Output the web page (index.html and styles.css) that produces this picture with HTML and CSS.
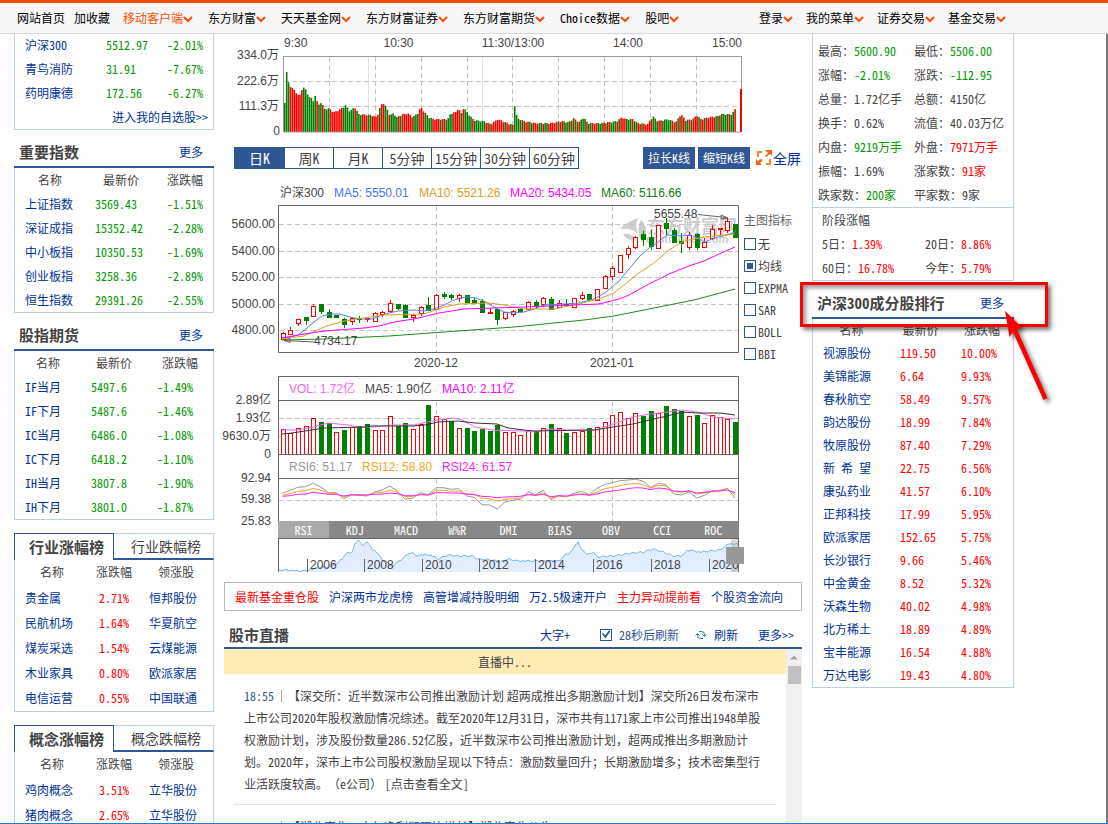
FILE: index.html
```html
<!DOCTYPE html>
<html lang="zh-CN">
<head>
<meta charset="utf-8">
<title>沪深300</title>
<link rel="stylesheet" href="styles.css">
</head>
<body>
<header class="topbar">
  <nav class="topnav">
    <a href="#" class="home">网站首页</a>
    <a href="#" class="fav">加收藏</a>
    <a href="#" class="hot">移动客户端<svg class="caret" viewBox="0 0 10 8"><path d="M1 2l4 4 4-4"/></svg></a>
    <a href="#">东方财富<svg class="caret" viewBox="0 0 10 8"><path d="M1 2l4 4 4-4"/></svg></a>
    <a href="#">天天基金网<svg class="caret" viewBox="0 0 10 8"><path d="M1 2l4 4 4-4"/></svg></a>
    <a href="#">东方财富证券<svg class="caret" viewBox="0 0 10 8"><path d="M1 2l4 4 4-4"/></svg></a>
    <a href="#">东方财富期货<svg class="caret" viewBox="0 0 10 8"><path d="M1 2l4 4 4-4"/></svg></a>
    <a href="#">Choice数据<svg class="caret" viewBox="0 0 10 8"><path d="M1 2l4 4 4-4"/></svg></a>
    <a href="#">股吧<svg class="caret" viewBox="0 0 10 8"><path d="M1 2l4 4 4-4"/></svg></a>
  </nav>
  <nav class="topnav account">
    <a href="#">登录<svg class="caret" viewBox="0 0 10 8"><path d="M1 2l4 4 4-4"/></svg></a>
    <a href="#">我的菜单<svg class="caret" viewBox="0 0 10 8"><path d="M1 2l4 4 4-4"/></svg></a>
    <a href="#">证券交易<svg class="caret" viewBox="0 0 10 8"><path d="M1 2l4 4 4-4"/></svg></a>
    <a href="#">基金交易<svg class="caret" viewBox="0 0 10 8"><path d="M1 2l4 4 4-4"/></svg></a>
  </nav>
</header>

<main class="page">
  <aside class="left">
    <section class="box watch">
      <table class="list">
        <colgroup><col class="c81"><col class="c61"><col></colgroup>
        <tr><td><a href="#">沪深300</a></td><td class="down">5512.97</td><td class="down end">-2.01%</td></tr>
        <tr><td><a href="#">青鸟消防</a></td><td class="down">31.91</td><td class="down end">-7.67%</td></tr>
        <tr><td><a href="#">药明康德</a></td><td class="down">172.56</td><td class="down end">-6.27%</td></tr>
      </table>
      <a href="#" class="enter">进入我的自选股&gt;&gt;</a>
    </section>

    <div class="head"><h2>重要指数</h2><a href="#">更多</a></div>
    <section class="box">
      <table class="list">
        <colgroup><col class="c70"><col class="c72"><col></colgroup>
        <tr><th>名称</th><th>最新价</th><th>涨跌幅</th></tr>
        <tr><td><a href="#">上证指数</a></td><td class="down">3569.43</td><td class="down end">-1.51%</td></tr>
        <tr><td><a href="#">深证成指</a></td><td class="down">15352.42</td><td class="down end">-2.28%</td></tr>
        <tr><td><a href="#">中小板指</a></td><td class="down">10350.53</td><td class="down end">-1.69%</td></tr>
        <tr><td><a href="#">创业板指</a></td><td class="down">3258.36</td><td class="down end">-2.89%</td></tr>
        <tr><td><a href="#">恒生指数</a></td><td class="down">29391.26</td><td class="down end">-2.55%</td></tr>
      </table>
    </section>

    <div class="head"><h2>股指期货</h2><a href="#">更多</a></div>
    <section class="box">
      <table class="list">
        <tr><th>名称</th><th>最新价</th><th>涨跌幅</th></tr>
        <tr><td><a href="#">IF当月</a></td><td class="down">5497.6</td><td class="down">-1.49%</td></tr>
        <tr><td><a href="#">IF下月</a></td><td class="down">5487.6</td><td class="down">-1.46%</td></tr>
        <tr><td><a href="#">IC当月</a></td><td class="down">6486.0</td><td class="down">-1.08%</td></tr>
        <tr><td><a href="#">IC下月</a></td><td class="down">6418.2</td><td class="down">-1.10%</td></tr>
        <tr><td><a href="#">IH当月</a></td><td class="down">3807.8</td><td class="down">-1.90%</td></tr>
        <tr><td><a href="#">IH下月</a></td><td class="down">3801.0</td><td class="down">-1.87%</td></tr>
      </table>
    </section>

    <section class="tabbed">
      <div class="tabs"><button type="button" class="on">行业涨幅榜</button><button type="button">行业跌幅榜</button></div>
      <div class="box">
        <table class="list roomy">
          <colgroup><col class="c74"><col class="c50"><col></colgroup>
          <tr><th>名称</th><th>涨跌幅</th><th>领涨股</th></tr>
          <tr><td><a href="#">贵金属</a></td><td class="up">2.71%</td><td><a href="#">恒邦股份</a></td></tr>
          <tr><td><a href="#">民航机场</a></td><td class="up">1.64%</td><td><a href="#">华夏航空</a></td></tr>
          <tr><td><a href="#">煤炭采选</a></td><td class="up">1.54%</td><td><a href="#">云煤能源</a></td></tr>
          <tr><td><a href="#">木业家具</a></td><td class="up">0.80%</td><td><a href="#">欧派家居</a></td></tr>
          <tr><td><a href="#">电信运营</a></td><td class="up">0.55%</td><td><a href="#">中国联通</a></td></tr>
        </table>
      </div>
    </section>

    <section class="tabbed">
      <div class="tabs"><button type="button" class="on">概念涨幅榜</button><button type="button">概念跌幅榜</button></div>
      <div class="box">
        <table class="list roomy">
          <colgroup><col class="c74"><col class="c50"><col></colgroup>
          <tr><th>名称</th><th>涨跌幅</th><th>领涨股</th></tr>
          <tr><td><a href="#">鸡肉概念</a></td><td class="up">3.51%</td><td><a href="#">立华股份</a></td></tr>
          <tr><td><a href="#">猪肉概念</a></td><td class="up">2.65%</td><td><a href="#">立华股份</a></td></tr>
        </table>
      </div>
    </section>
  </aside>

  <section class="middle">
    <svg class="chart" id="minute" viewBox="0 0 578 106"></svg>

    <div class="toolbar">
      <div class="periods">
        <button type="button" class="on">日K</button><button type="button">周K</button><button type="button">月K</button><button type="button">5分钟</button><button type="button">15分钟</button><button type="button">30分钟</button><button type="button">60分钟</button>
      </div>
      <div class="actions">
        <button type="button">拉长K线</button><button type="button">缩短K线</button>
        <a href="#" class="full"><svg viewBox="0 0 16 16"><path class="a" d="M1 7V1h5v2H3v4zM15 9v6h-5v-2h3V9z"/><path class="b" d="M9 0h7v6l-2-2-4 3-1-1 3-3zM0 9l2 2 3-2 2 1-3 3 2 2H0z"/></svg>全屏</a>
      </div>
    </div>

    <div class="kline">
      <div class="plots">
        <svg class="chart" id="candles" viewBox="0 0 516 195"></svg>
        <svg class="chart" id="volume" viewBox="0 0 516 151"></svg>
        <div class="oscillators">
          <button type="button" class="on">RSI</button><button type="button">KDJ</button><button type="button">MACD</button><button type="button">W%R</button><button type="button">DMI</button><button type="button">BIAS</button><button type="button">OBV</button><button type="button">CCI</button><button type="button">ROC</button>
        </div>
        <svg class="chart" id="navigator" viewBox="0 0 516 34"></svg>
      </div>
      <fieldset class="overlays">
        <legend>主图指标</legend>
        <label><input type="radio" name="overlay">无</label>
        <label><input type="radio" name="overlay" checked>均线</label>
        <label><input type="radio" name="overlay">EXPMA</label>
        <label><input type="radio" name="overlay">SAR</label>
        <label><input type="radio" name="overlay">BOLL</label>
        <label><input type="radio" name="overlay">BBI</label>
      </fieldset>
    </div>

    <nav class="quick">
      <a href="#" class="up">最新基金重仓股</a>
      <a href="#">沪深两市龙虎榜</a>
      <a href="#">高管增减持股明细</a>
      <a href="#">万2.5极速开户</a>
      <a href="#" class="up">主力异动提前看</a>
      <a href="#">个股资金流向</a>
    </nav>

    <div class="live-head">
      <h2>股市直播</h2>
      <a href="#" class="bigger">大字+</a>
      <label><input type="checkbox" checked>28秒后刷新</label>
      <a href="#" class="reload"><svg viewBox="0 0 12 12"><path d="M4 2.500h2.500a3 3 0 0 1 3 3V7M7.500 5.500l2 2 2-2M8 9.500H5.500a3 3 0 0 1-3-3V5M.5 6.500l2-2 2 2"/></svg>刷新</a>
      <a href="#">更多&gt;&gt;</a>
    </div>
    <div class="live">
      <div class="feed">
        <p class="status">直播中...</p>
        <article><time>18:55</time>【深交所：近半数深市公司推出激励计划 超两成推出多期激励计划】深交所<span class="n">26</span>日发布深市上市公司<span class="n">2020</span>年股权激励情况综述。截至<span class="n">2020</span>年<span class="n">12</span>月<span class="n">31</span>日，深市共有<span class="n">1171</span>家上市公司推出<span class="n">1948</span>单股权激励计划，涉及股份数量<span class="n">286.52</span>亿股，近半数深市公司推出激励计划，超两成推出多期激励计划。<span class="n">2020</span>年，深市上市公司股权激励呈现以下特点：激励数量回升；长期激励增多；技术密集型行业活跃度较高。（<span class="n">e</span>公司） <span class="n">[</span>点击查看全文<span class="n">]</span></article>
        <article><time>18:53</time>【湖北宜化：去年净利润同比增长】湖北宜化公告</article>
      </div>
      <div class="scroll"><svg viewBox="0 0 16 16"><path d="M4 10l4-4 4 4z"/></svg><span></span></div>
    </div>
  </section>

  <aside class="right">
    <section class="box quote">
      <dl>
        <div><dt>最高：</dt><dd class="down">5600.90</dd></div><div><dt>最低：</dt><dd class="down">5506.00</dd></div>
        <div><dt>涨幅：</dt><dd class="down">-2.01%</dd></div><div><dt>涨跌：</dt><dd class="down">-112.95</dd></div>
        <div><dt>总量：</dt><dd>1.72亿手</dd></div><div><dt>总额：</dt><dd>4150亿</dd></div>
        <div><dt>换手：</dt><dd>0.62%</dd></div><div><dt>流值：</dt><dd>40.03万亿</dd></div>
        <div><dt>内盘：</dt><dd class="down">9219万手</dd></div><div><dt>外盘：</dt><dd class="up">7971万手</dd></div>
        <div><dt>振幅：</dt><dd>1.69%</dd></div><div><dt>涨家数：</dt><dd class="up">91家</dd></div>
        <div><dt>跌家数：</dt><dd class="down">200家</dd></div><div><dt>平家数：</dt><dd>9家</dd></div>
      </dl>
    </section>
    <section class="box stage">
      <h3>阶段涨幅</h3>
      <dl>
        <div><dt>5日：</dt><dd class="up">1.39%</dd></div><div><dt>20日：</dt><dd class="up">8.86%</dd></div>
        <div><dt>60日：</dt><dd class="up">16.78%</dd></div><div><dt>今年：</dt><dd class="up">5.79%</dd></div>
      </dl>
    </section>
    <section class="rank">
      <div class="head"><h2>沪深300成分股排行</h2><a href="#">更多</a></div>
      <div class="box">
        <table class="list dense">
          <colgroup><col class="c77"><col class="c61"><col></colgroup>
          <tr><th>名称</th><th>最新价</th><th>涨跌幅</th></tr>
          <tr><td><a href="#">视源股份</a></td><td>119.50</td><td>10.00%</td></tr>
          <tr><td><a href="#">美锦能源</a></td><td>6.64</td><td>9.93%</td></tr>
          <tr><td><a href="#">春秋航空</a></td><td>58.49</td><td>9.57%</td></tr>
          <tr><td><a href="#">韵达股份</a></td><td>18.99</td><td>7.84%</td></tr>
          <tr><td><a href="#">牧原股份</a></td><td>87.40</td><td>7.29%</td></tr>
          <tr><td><a href="#">新 希 望</a></td><td>22.75</td><td>6.56%</td></tr>
          <tr><td><a href="#">康弘药业</a></td><td>41.57</td><td>6.10%</td></tr>
          <tr><td><a href="#">正邦科技</a></td><td>17.99</td><td>5.95%</td></tr>
          <tr><td><a href="#">欧派家居</a></td><td>152.65</td><td>5.75%</td></tr>
          <tr><td><a href="#">长沙银行</a></td><td>9.66</td><td>5.46%</td></tr>
          <tr><td><a href="#">中金黄金</a></td><td>8.52</td><td>5.32%</td></tr>
          <tr><td><a href="#">沃森生物</a></td><td>40.02</td><td>4.98%</td></tr>
          <tr><td><a href="#">北方稀土</a></td><td>18.89</td><td>4.89%</td></tr>
          <tr><td><a href="#">宝丰能源</a></td><td>16.54</td><td>4.88%</td></tr>
          <tr><td><a href="#">万达电影</a></td><td>19.43</td><td>4.80%</td></tr>
        </table>
      </div>
      <div class="mark"></div>
      <svg class="pointer" viewBox="0 0 60 100"><path d="M8 6L12.500 32 16 27l30.500 68 4-2L20 24.500l5-2z"/></svg>
    </section>
  </aside>
</main>
<script src="charts.js"></script>
</body>
</html>
```

FILE: styles.css
```css
* { box-sizing: border-box; }
body {
  margin: 0;
  height: 100vh;
  overflow: hidden;
  display: flex;
  flex-direction: column;
  background: #fff;
  color: #444;
  font: 12px/24px "Noto Sans CJK SC", sans-serif;
  font-feature-settings: "hwid";
  border-bottom: 1px solid #1c7fd0;
}
a { color: #039; text-decoration: none; }
button, input { font: inherit; font-feature-settings: inherit; margin: 0; }
button { padding: 0; cursor: pointer; }
h2, h3, p, dl, dd { margin: 0; }
h2 { font-size: 15px; font-weight: 700; color: #444; }
.up { color: #f00; }
.down { color: #090; }

.topbar {
  flex: none;
  display: flex;
  height: 34px;
  padding: 0 102px 0 17px;
  border-top: 3px solid #ff4a00;
  border-bottom: 1px solid #d9d9d9;
  background: #f7f7f7;
  line-height: 30px;
  white-space: nowrap;
}
.topnav { display: flex; gap: 15px; }
.topnav a { color: #000; }
.topnav .home { margin-right: -6px; }
.topnav .fav { margin-right: -2px; }
.topnav .hot { color: #ff4a00; }
.account { gap: 13px; margin-left: auto; }
.caret { width: 10px; height: 8px; fill: none; stroke: #ff4a00; stroke-width: 2; }

.page {
  flex: 1;
  min-height: 0;
  overflow: hidden;
  display: grid;
  grid-template-columns: 200px minmax(0, 1fr) 202px;
  align-items: start;
  gap: 10px;
  padding: 0 92px 0 14px;
  border-right: 2px solid #777;
}

.box { border: 1px solid #b9d2e8; border-top: 0; }
.list { width: 100%; table-layout: fixed; border-collapse: collapse; }
.list th { padding: 0; font-weight: 400; height: 24px; vertical-align: top; }
.list td { padding: 0 0 0 10px; height: 24px; vertical-align: top; }
.list .end { padding: 0 10px 0 0; text-align: right; }
.list.roomy th { height: 26px; }
.list.roomy td { height: 25px; }
.list.dense th { height: 23px; }
.list.dense td { height: 23px; color: #f00; }
.watch .list, .list.dense { line-height: 22px; }
.c50 { width: 50px; }
.c61 { width: 61px; }
.c70 { width: 70px; }
.c72 { width: 72px; }
.c74 { width: 74px; }
.c77 { width: 77px; }
.c81 { width: 81px; }

.head {
  display: flex;
  justify-content: space-between;
  margin-top: 10px;
  padding: 0 10px 2px 5px;
  line-height: 24px;
  border-bottom: 2px solid #2f5796;
}
.left .head a { padding-right: 1px; }
.watch { height: 96px; }
.enter { display: block; padding-right: 5px; text-align: right; line-height: 22px; }
.tabbed { margin-top: 13px; }
.tabs { display: grid; grid-template-columns: 1fr 1fr; height: 27px; }
.tabs button {
  padding-left: 5px;
  border: 1px solid #b9d2e8;
  border-left: 0;
  border-bottom: 2px solid #2f5796;
  background: #fff;
  color: #444;
  font-size: 14px;
}
.tabs .on {
  border: 1px solid #2f5796;
  border-bottom: 0;
  font-size: 15px;
  font-weight: 700;
}

.chart { display: block; width: 100%; height: auto; overflow: visible; }
.chart text { font: 12px "Liberation Sans", "Noto Sans CJK SC", sans-serif; fill: #444; font-feature-settings: normal; }
.chart .end { text-anchor: end; }
.chart .mid { text-anchor: middle; }
.chart .frame { fill: none; stroke: #666; }
.chart .soft { fill: none; stroke: #999; }
.chart .dash { fill: none; stroke: #c4c4c4; stroke-dasharray: 5 3; }
.chart .pale { stroke: #e4e4e4; }
.chart .line { fill: none; stroke-width: 1; }
.chart .gain { fill: #fff; stroke: #f00; }
.chart .loss { fill: #008000; stroke: #008000; }
.chart .barup { fill: #f00; }
.chart .bardown { fill: #008000; }
.chart .brand { fill: #ccc; font-size: 18px; font-weight: 700; }
.chart .brand-en { fill: #ccc; font-size: 11px; font-weight: 700; }
.chart .brand-mark { fill: #ccc; }

.toolbar {
  display: flex;
  justify-content: space-between;
  height: 22px;
  margin-top: 7px;
  padding: 0 1px 0 10px;
  line-height: 20px;
}
.periods { display: flex; border: 1px solid #2f5796; }
.periods button {
  width: 49px;
  border: 0;
  border-left: 1px solid #2f5796;
  background: #fff;
  color: #444;
  font-size: 14px;
}
.periods button:first-child { border-left: 0; }
.periods .on { background: #2f5796; color: #fff; }
.actions { display: flex; gap: 3px; }
.actions button { width: 52px; border: 0; background: #2f5796; color: #fff; }
.full { display: flex; align-items: center; gap: 1px; margin-left: 3px; font-size: 14px; }
.full svg { width: 16px; height: 16px; }
.full .a { fill: #f7892f; }
.full .b { fill: #f26522; }

.kline { display: flex; gap: 4px; margin-top: 6px; }
.plots { flex: 1; min-width: 0; }
.overlays {
  flex: none;
  width: 58px;
  margin: 0;
  padding: 36px 0 0;
  border: 0;
  display: flex;
  flex-direction: column;
  line-height: 22px;
}
.overlays legend { float: left; margin-bottom: 4px; padding: 0; line-height: 18px; color: #666; }
.overlays label { display: flex; align-items: center; gap: 2px; white-space: nowrap; }
.overlays input {
  appearance: none;
  width: 12px;
  height: 12px;
  border: 1px solid #2f5796;
  background: #fff;
}
.overlays input:checked { background: #2f5796; box-shadow: inset 0 0 0 2px #fff; }
.oscillators { display: flex; height: 18px; margin: 0 1px 0 54px; border-bottom: 1px solid #666; background: #888; }
.oscillators button {
  flex: 1;
  border: 0;
  background: #888;
  color: #fff;
  line-height: 17px;
}
.oscillators .on { background: #aaa; }

.quick {
  display: flex;
  gap: 10px;
  margin-top: 9px;
  padding: 0 10px;
  border: 1px solid #b8b8b8;
  line-height: 27px;
  white-space: nowrap;
}
.live-head {
  display: flex;
  align-items: center;
  margin-top: 11px;
  padding: 0 8px 0 5px;
  border-bottom: 2px solid #2f5796;
  line-height: 25px;
}
.live-head .bigger { margin: 0 30px 0 auto; }
.live-head label { display: flex; align-items: center; gap: 7px; margin-right: 16px; color: #2f5796; }
.live-head input {
  appearance: none;
  width: 12px;
  height: 12px;
  border: 1px solid #2f5796;
}
.live-head input:checked::before {
  content: "";
  display: block;
  width: 10px;
  height: 10px;
  background: #2f5796;
  clip-path: polygon(10% 45%, 25% 35%, 42% 60%, 80% 8%, 95% 18%, 45% 90%);
}
.reload { display: flex; align-items: center; gap: 7px; margin-right: 20px; }
.reload svg { flex: none; width: 12px; height: 12px; fill: none; stroke: #2f7a96; }
.live { display: flex; }
.feed { flex: 1; min-width: 0; }
.status { background: #ffecb5; text-align: center; line-height: 25px; }
.feed article {
  margin: 0 10px;
  padding: 11px 10px 9px;
  line-height: 22px;
  border-bottom: 1px solid #dbe4ee;
  font-feature-settings: normal;
  text-spacing-trim: space-all;
}
.feed .n { font-feature-settings: "hwid"; }
.feed time {
  display: inline-block;
  margin-right: 6px;
  padding-right: 7px;
  border-right: 1px solid #aaa;
  color: #2f5796;
  line-height: 12px;
  font-feature-settings: "hwid";
}
.scroll { width: 16px; background: #f0f0f0; }
.scroll svg { display: block; width: 16px; height: 17px; fill: #a3a3a3; }
.scroll span { display: block; height: 18px; margin: 0 1px 0 2px; background: #c1c1c1; }

.quote dl { display: grid; grid-template-columns: 96px 1fr; padding: 5px 0 0 5px; }
.quote dl div, .stage dl div { display: flex; white-space: nowrap; }
.stage { padding: 0 0 0 9px; }
.stage h3 { font-size: 12px; font-weight: 400; }
.stage dl { display: grid; grid-template-columns: 103px 1fr; }
.rank { position: relative; }
.mark {
  position: absolute;
  top: -9px;
  left: -12px;
  width: 248px;
  height: 45px;
  border: 3px solid #f00;
  box-shadow: 3px 3px 4px rgba(0, 0, 0, .5), inset 3px 3px 4px rgba(0, 0, 0, .4);
}
.pointer {
  position: absolute;
  top: 14px;
  left: 185px;
  width: 60px;
  height: 100px;
  fill: #f00;
  filter: drop-shadow(3px 3px 2px rgba(0, 0, 0, .5));
}
```

FILE: charts.js
```js
const put = (id, html) => { document.getElementById(id).innerHTML = html; };
const text = (x, y, s, cls = '', fill = '') =>
  `<text x="${x}" y="${y}" class="${cls}"${fill ? ` style="fill:${fill}"` : ''}>${s}</text>`;
const path = (d, cls) => `<path d="${d}" class="${cls}"/>`;
const line = (pts, color) => `<polyline class="line" points="${pts}" stroke="${color}"/>`;

/* intraday volume */
{
  const levels = [[60, 103], [61.5, 103], [62, 63], [63, 63], [64, 87], [68, 87], [71, 93], [76, 95], [78, 86], [80, 87], [83, 95], [86, 97], [89, 102],
    [91, 92], [93, 106], [97, 101], [99, 109], [104, 108], [109, 112], [114, 110], [121, 105], [125, 111], [130, 107], [134, 114],
    [147, 115], [152, 117], [155, 108], [158, 102], [161, 106], [165, 115], [169, 113], [172, 117], [178, 114], [183, 113], [188, 117],
    [193, 113], [196, 107], [200, 112], [204, 117], [209, 119], [223, 119], [226, 113], [231, 112], [234, 107], [236, 115], [239, 107],
    [243, 113], [249, 120], [259, 121], [266, 124], [273, 119], [283, 123], [289, 125], [290, 103], [291.5, 103], [292, 123], [294, 118], [299, 121],
    [312, 123], [326, 123], [336, 121], [344, 122], [349, 118], [354, 122], [359, 117], [363, 123], [376, 123], [392, 121], [397, 117],
    [401, 119], [408, 119], [413, 123], [423, 124], [428, 116], [433, 121], [443, 119], [451, 122], [456, 114], [461, 120], [468, 119],
    [472, 115], [476, 119], [484, 117], [493, 116], [496, 114], [507, 114], [511, 108]];
  const pattern = 'GGGRRRRRRRGGGGGGGRGGRGGGRRRRRRRGGGGGGRGGGRRRGGRRRRGRRGGRGGGGRGRRRRRRGGGRRRGGGGRRRRGRRGGGGRRRRGRGGGGRGGGGGGRRGRRRRRRRGRRGRGGGGRGRRGGRRRGGRGGRRRRRGRRGGGRGGRGRGGGRGGRRRGGGRRGRGGGRGRRRGGGRGGRRGRRRRRGGGRRGGGGGRRGRGRRGGRGRRRGRRGRRRRRGGRGGGGRGGRGRRGRRRRGRRRG';
  let out = path('M59 22.5H517', 'soft');
  out += path('M144.500 23V98M258.500 23V98M398.500 23V98', 'pale');
  out += path('M60 47.500H517M60 72.500H517M105.500 23V98M151.500 23V98M197.500 23V98M243.500 23V98M288.500 23V98M334.500 23V98M380.500 23V98M426.500 23V98M472.500 23V98', 'dash');
  let k = 0;
  for (let i = 0; i < 238; i++) {
    const x = 60 + i * 1.9;
    while (k < levels.length - 2 && levels[k + 1][0] <= x) k++;
    const [x0, y0] = levels[k], [x1, y1] = levels[k + 1];
    const top = y0 + (y1 - y0) * Math.min(1, Math.max(0, (x - x0) / (x1 - x0))) - 34 + (i % 3 === 1 ? 1 : 0);
    out += `<rect x="${x.toFixed(1)}" y="${top.toFixed(1)}" width="1.6" height="${(98 - top).toFixed(1)}" class="${pattern[i % pattern.length] === 'R' ? 'barup' : 'bardown'}"/>`;
  }
  out += '<rect x="516" y="55" width="2" height="43" class="barup"/>';
  out += path('M59.500 22V98M517.500 22V55', 'soft') + path('M60 98H517', 'soft');
  out += text(60, 13, '9:30') + text(174.500, 13, '10:30', 'mid') + text(289, 13, '11:30/13:00', 'mid') + text(404, 13, '14:00', 'mid') + text(518, 13, '15:00', 'end');
  out += text(55, 25, '334.0万', 'end') + text(55, 51, '222.6万', 'end') + text(55, 76, '111.3万', 'end') + text(56, 101, '0', 'end');
  put('minute', out);
}

const slot = i => 58.5 + i * 7.67;

/* daily candles: high, body top, body bottom, low */
{
  const data = `157 158 164 165 r|152 155 159 160 r|144 144 148 151 r|142 142 145 150 g|129 131 141 141 r|129 129 136 139 g|134 137 142 143 g|140 140 142 143 g|143 144 149 153 g|142 143 146 150 r|141 143 144 148 g|143 143 144 147 r|137 138 146 147 r|136 137 139 142 r|125 128 136 138 r|129 129 133 135 g|129 130 142 142 g|139 140 142 147 r|131 132 138 141 r|122 130 135 135 g|119 120 134 134 r|117 119 121 124 g|119 120 122 125 g|119 120 123 127 r|120 120 127 127 g|123 125 128 129 g|124 126 137 137 g|133 137 138 139 r|134 134 144 150 g|137 137 143 145 r|135 136 139 142 r|133 134 136 137 g|126 127 134 135 r|125 127 130 134 g|122 123 129 132 r|122 124 134 134 g|125 128 132 133 r|124 129 130 132 g|123 123 132 132 r|117 120 123 125 r|119 119 124 124 g|114 114 125 125 r|100 101 113 114 r|91 93 101 105 r|80 80 97 97 r|71 73 79 84 r|61 62 72 74 r|56 59 64 71 g|55 62 71 75 g|50 50 73 74 r|43 48 53 60 g|53 55 67 68 g|58 66 68 78 g|57 60 72 75 r|58 59 72 75 g|63 67 72 72 r|50 54 63 65 r|53 53 54 60 r|42 46 55 58 r|49 49 62 63 g`.split('|');
  let out = `<g class="brand-mark"><path d="M396 54c6-6 12-9 19-11-4 4-3 10-1 16-5-5-11-6-18-5zM399 59c7-1 12 2 15 7-7 0-12-2-15-7zM417 45c6 5 7 14 1 22-4-7-5-15-1-22z"/></g>`;
  out += text(423, 58, '东方财富网', 'brand') + text(422, 68, 'eastmoney.com', 'brand-en');
  out += path('M55 49.500H514M55 76.500H514M55 102.500H514M55 129.500H514M55 155.500H514M212.500 31V177M388.500 31V177', 'dash');
  out += path('M54.500 30.500H514.500V177.500H54.500z', 'frame');
  data.forEach((row, i) => {
    const [hi, top, bottom, lo, kind] = row.split(' ');
    const x = Math.round(slot(i)) + .5, cls = kind === 'r' ? 'gain' : 'loss';
    out += `<path d="M${x} ${hi}V${lo}" class="${cls}"/><rect x="${x - 2}" y="${+top + .5}" width="4" height="${Math.max(1, bottom - top)}" class="${cls}"/>`;
  });
  out += line('58,163 66,162 74,160 82,154 90,147 98,141 107,139 115,139 122,141 130,143 140,144 148,144 156,141 165,138 174,136 190,135 200,136 210,134 220,130 228,126 236,123 244,122 252,123 262,127 270,132 280,137 290,138 300,137 310,134 320,130 340,129 355,128 370,124 382,117 395,106 405,94 415,82 425,73 433,68 443,60 457,61 467,60 475,64 481,67 490,63 503,60 511,57', '#5580ee');
  out += line('58,164 80,161 100,152 120,146 140,143 160,140 200,139 220,132 235,129 265,128 280,130 300,134 330,134 350,130 375,124 390,118 400,110 415,98 430,88 445,75 460,66 480,62 511,59', '#daa020');
  out += line('58,163 80,159 100,156 140,153 155,151 170,147 190,144 215,138 240,134 300,132 350,130 375,129 395,124 405,120 425,109 445,99 465,91 480,86 495,79 511,72', '#f0f');
  out += line('58,165 100,164 165,161 220,157 290,152 360,145 390,141 425,134 470,125 511,114', '#228b22');
  out += path('M60 165.500L90 167M60 165.500l6-2v4zM474 39.500L502 42.500M504 43l-7-3v4z', 'frame');
  out += text(90, 170, '4734.17') + text(430, 43, '5655.48');
  [['5600.00', 53], ['5400.00', 80], ['5200.00', 106], ['5000.00', 133], ['4800.00', 159]].forEach(([s, y]) => { out += text(51, y, s, 'end'); });
  out += text(212, 192, '2020-12', 'mid') + text(388, 192, '2021-01', 'mid');
  out += text(56, 22, '沪深300') + text(110, 22, 'MA5: 5550.01', '', '#4477f5') + text(195, 22, 'MA10: 5521.26', '', '#daa020') + text(286, 22, 'MA20: 5434.05', '', '#f0f') + text(377, 22, 'MA60: 5116.66', '', '#108010');
  put('candles', out);
}

/* daily volume and RSI, in thirds of a unit */
{
  const vol = '178 190 175 169 145 157g 160g 187 181g 172 169g 163g 181 181 139 169g 160g 178 163 105g 139 146 154g 175 175g 184g 178g 184g 165g 187 187 196 184 182g 175 163g 175 190g 187 182 175g 172 157 136 127 145 130 139g 124g 130 109g 118g 124g 139 136g 160 136 142 148 157g'.split(' ');
  const rsi = {
    '#999': '370 361 352 350 340 351 368 368 386 374 376 378 366 360 348 364 388 384 368 374 353 353 358 356 378 382 404 405 417 396 391 388 365 374 361 389 377 380 370 364 374 355 343 338 332 330 328 333 352 340 344 372 375 366 384 376 363 362 355 384',
    '#f5a623': '376 371 364 363 355 361 370 370 381 373 374 375 369 367 361 367 380 379 373 376 361 361 364 363 372 373 384 386 394 388 386 384 372 376 368 384 378 380 374 371 375 366 356 352 347 343 340 344 354 346 348 364 367 362 372 369 363 361 357 374',
    '#ff22ff': '379 377 373 372 367 370 373 373 378 375 375 375 373 372 369 371 377 377 374 375 368 368 369 369 373 374 379 380 383 381 380 379 374 376 373 380 377 378 375 373 376 372 366 363 360 356 353 354 359 354 356 363 365 363 369 367 364 363 360 368'
  };
  let out = path('M55 48.500H514M55 66.500H514M55 130.500H514M212.500 32V84M388.500 32V84M212.500 109V151M388.500 109V151', 'dash');
  vol.forEach((v, i) => {
    const y = Math.round(parseInt(v, 10) / 3) + .5;
    out += `<rect x="${Math.round(slot(i)) - 1.5}" y="${y}" width="4" height="${84.5 - y}" class="${v.endsWith('g') ? 'loss' : 'gain'}"/>`;
  });
  out += path('M54.500 151V6.500H514.500V151M54 30.500H514M54 84.500H514M54 108.500H514', 'frame');
  out += line('58,60 74,60 89,57 104,53 124,55 135,57 148,57 168,55 190,55 208,51 228,48 236,49 251,57 268,60 300,61 311,62 326,59 343,60 373,60 389,54 409,47 426,44 443,42 458,40 473,42 489,47 511,49', '#f466f4');
  out += line('58,64 68,63 81,61 101,58 141,57 148,56 188,56 201,55 214,52 234,51 251,53 273,54 284,58 300,60 311,61 370,60 389,57 409,54 426,50 443,46 458,42 473,43 496,43 511,45', '#333');
  for (const [color, row] of Object.entries(rsi))
    out += line(row.split(' ').map((v, i) => `${slot(i).toFixed(1)},${(v / 3).toFixed(1)}`).join(' '), color);
  [['2.89亿', 34], ['1.93亿', 52], ['9630.0万', 70], ['0', 88], ['92.94', 112], ['59.38', 133], ['25.83', 155]].forEach(([s, y]) => { out += text(47, y, s, 'end'); });
  out += text(65, 23, 'VOL: 1.72亿', '', '#f466f4') + text(141, 23, 'MA5: 1.90亿') + text(218, 23, 'MA10: 2.11亿', '', '#f0f');
  out += text(65, 101, 'RSI6: 51.17', '', '#999') + text(138, 101, 'RSI12: 58.80', '', '#f5a623') + text(218, 101, 'RSI24: 61.57', '', '#ff22ff');
  put('volume', out);
}

/* long-range navigator */
{
  const keys = [[54, 31], [64, 31], [71, 32], [81, 32], [88, 30], [98, 28], [106, 28], [113, 24], [118, 20], [124, 13], [128, 14], [131, 5], [135, 1], [139, 7], [143, 2],
    [148, 10], [153, 14], [159, 21], [168, 27], [174, 23], [183, 16], [188, 14], [194, 17], [201, 15], [208, 17], [214, 20], [224, 16], [234, 17], [248, 17], [254, 20],
    [268, 21], [276, 23], [284, 20], [294, 22], [301, 22], [313, 22], [336, 22], [341, 16], [346, 14], [351, 6], [354, 3], [358, 11], [363, 16], [369, 13], [373, 18],
    [389, 17], [409, 14], [419, 13], [429, 10], [439, 13], [449, 17], [458, 17], [463, 11], [476, 13], [496, 11], [500, 8], [506, 4], [510, 6], [515, 2]];
  const pts = [];
  for (let k = 0; k < keys.length - 1; k++) {
    const [x0, y0] = keys[k], [x1, y1] = keys[k + 1];
    for (let x = x0; x < x1; x += 2) pts.push(`${x},${(y0 + (y1 - y0) * (x - x0) / (x1 - x0) + Math.sin(x * 2.3) * .8).toFixed(1)}`);
  }
  pts.push('515,2');
  let out = `<polygon points="54,33 ${pts.join(' ')} 515,33" fill="#e2eeff"/>` + line(pts.join(' '), '#7cb5ec');
  out += '<rect x="507" y="0" width="8" height="33" fill="#888" opacity=".3"/>' + path('M54.500 0V33', 'frame');
  [[83, 2006], [140, 2008], [198, 2010], [255, 2012], [311, 2014], [369, 2016], [427, 2018], [485, 2020]].forEach(([x, s]) => {
    out += path(`M${x + .5} 20V33`, 'frame') + text(x + 3, 30, s);
  });
  out += path('M514.500 0V33', 'frame') + '<rect x="502" y="8" width="18" height="17" fill="#999"/>';
  put('navigator', out);
}
```
